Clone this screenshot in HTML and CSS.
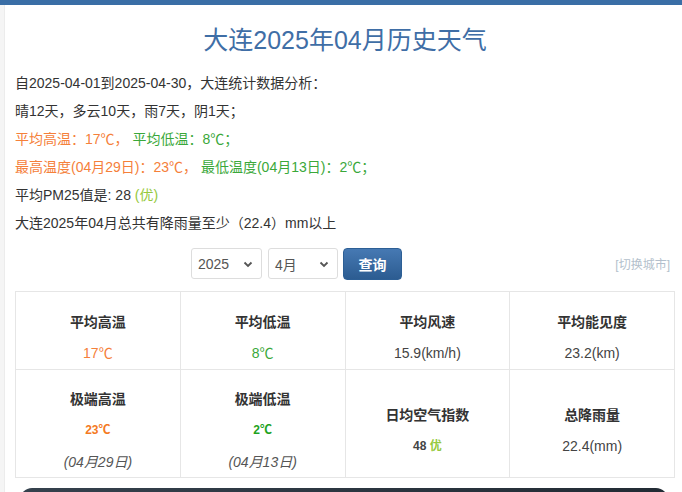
FILE: index.html
```html
<!DOCTYPE html>
<html lang="zh-CN">
<head>
  <meta charset="UTF-8">
  <title>大连2025年04月历史天气</title>
  <meta name="viewport" content="width=device-width, initial-scale=1.0">
  <link rel="stylesheet" href="styles.css">
</head>
<body>
  <div class="top-bar"></div>

  <div class="container">
    <h1 class="title">大连2025年04月历史天气</h1>

    <div class="summary">
      <p>自2025-04-01到2025-04-30，大连统计数据分析：</p>
      <p>晴12天，多云10天，雨7天，阴1天；</p>
      <p><span class="hot">平均高温：17℃，</span> <span class="cold">平均低温：8℃；</span></p>
      <p><span class="hot">最高温度(04月29日)：23℃，</span> <span class="cold">最低温度(04月13日)：2℃；</span></p>
      <p>平均PM25值是: 28 <span class="good">(优)</span></p>
      <p>大连2025年04月总共有降雨量至少（22.4）mm以上</p>
    </div>

    <div class="query-row">
      <form class="query-form" onsubmit="return false">
        <div class="pick pick-year">
          <span>2025</span>
          <svg width="10" height="8" viewBox="0 0 10 8"><path d="M1.5 2.5 L5 6 L8.5 2.5" fill="none" stroke="#555" stroke-width="1.8"/></svg>
        </div>
        <div class="pick pick-month">
          <span>4月</span>
          <svg width="10" height="8" viewBox="0 0 10 8"><path d="M1.5 2.5 L5 6 L8.5 2.5" fill="none" stroke="#555" stroke-width="1.8"/></svg>
        </div>
        <button class="btn-query">查询</button>
      </form>
      <a class="switch-city" href="#">[切换城市]</a>
    </div>

    <div class="stats">
      <div class="cell">
        <div class="label">平均高温</div>
        <div class="value hot">17℃</div>
      </div>
      <div class="cell">
        <div class="label">平均低温</div>
        <div class="value cold">8℃</div>
      </div>
      <div class="cell">
        <div class="label">平均风速</div>
        <div class="value">15.9(km/h)</div>
      </div>
      <div class="cell">
        <div class="label">平均能见度</div>
        <div class="value">23.2(km)</div>
      </div>

      <div class="cell">
        <div class="label">极端高温</div>
        <div class="value strong hot-strong">23℃</div>
        <div class="date">(04月29日)</div>
      </div>
      <div class="cell">
        <div class="label">极端低温</div>
        <div class="value strong cold-strong">2℃</div>
        <div class="date">(04月13日)</div>
      </div>
      <div class="cell">
        <div class="label">日均空气指数</div>
        <div class="value strong">48 <span class="good">优</span></div>
      </div>
      <div class="cell">
        <div class="label">总降雨量</div>
        <div class="value">22.4(mm)</div>
      </div>
    </div>

    <div class="footer-bar"></div>
  </div>
</body>
</html>
```

FILE: styles.css
```css
* { box-sizing: border-box; }

body {
  margin: 0;
  background: #f5f5f5;
  color: #333;
  font-family: "Liberation Sans", "Noto Sans CJK SC", sans-serif;
  font-size: 14px;
}

.top-bar {
  height: 5px;
  background: #3a6ea6;
}

.container {
  margin-left: 4px;
  background: #fff;
  border-left: 1px solid #ececec;
  padding: 19px 7px 0 10px;
  min-height: 487px;
}

.title {
  margin: 0;
  line-height: 32px;
  font-size: 25px;
  font-weight: normal;
  text-align: center;
  color: #3f6ea6;
}

.summary {
  margin-top: 13px;
}

.summary p {
  margin: 0;
  line-height: 28px;
}

.value { color: #444; }

.hot, .value.hot { color: #f5803a; }
.cold, .value.cold { color: #3aa83a; }
.good { color: #95c93d; }

.query-row {
  display: flex;
  align-items: center;
  margin-top: 10px;
  height: 33px;
}

.query-form {
  display: flex;
  align-items: center;
  margin-left: 176px;
}

.pick {
  display: flex;
  align-items: center;
  justify-content: space-between;
  height: 31px;
  padding: 0 8px 0 6px;
  border: 1px solid #ddd;
  border-radius: 3px;
  background: #fff;
  color: #555;
  font-size: 14px;
}

.pick-year { width: 71px; }
.pick-month { width: 70px; margin-left: 6px; }

.btn-query {
  width: 59px;
  height: 32px;
  margin-left: 5px;
  border: 1px solid #2d5f95;
  border-radius: 4px;
  background: linear-gradient(#4679b3, #2c5c91);
  color: #fff;
  font-family: inherit;
  font-size: 14px;
  font-weight: bold;
}

.switch-city {
  margin-left: auto;
  margin-right: 5px;
  font-size: 12px;
  color: #b3bfcc;
  text-decoration: none;
}

.stats {
  display: grid;
  grid-template-columns: repeat(4, 1fr);
  grid-template-rows: 78px 108px;
  margin-top: 11px;
  border-top: 1px solid #e6e6e6;
  border-left: 1px solid #e6e6e6;
}

.cell {
  display: flex;
  flex-direction: column;
  align-items: center;
  justify-content: center;
  padding-top: 13px;
  border-right: 1px solid #e6e6e6;
  border-bottom: 1px solid #e6e6e6;
  text-align: center;
}

.label {
  line-height: 26px;
  font-weight: bold;
  color: #333;
}

.value {
  margin-top: 5px;
  line-height: 26px;
}

.value.strong {
  font-size: 12px;
  font-weight: bold;
}

.value.hot-strong { color: #f47a1f; }
.value.cold-strong { color: #1ea31e; }

.date {
  margin-top: 6px;
  line-height: 26px;
  font-style: italic;
  color: #555;
}

.footer-bar {
  height: 20px;
  margin: 10px 7px 0 5px;
  border-radius: 12px 12px 0 0;
  background: linear-gradient(90deg, #35414d, #222b34);
}
```
